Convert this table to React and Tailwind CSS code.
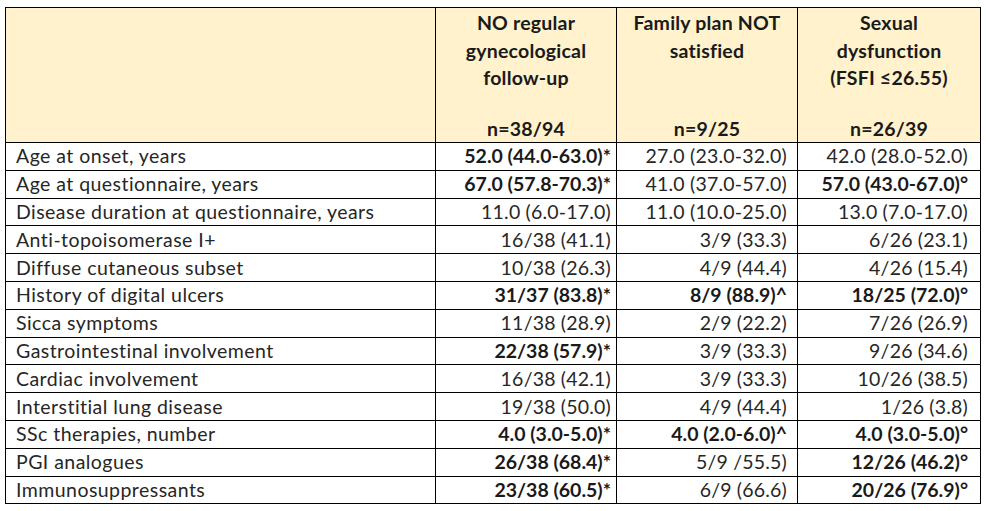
const rows = [
  ['Age at onset, years', ['52.0 (44.0-63.0)*', true], ['27.0 (23.0-32.0)', false], ['42.0 (28.0-52.0)', false]],
  ['Age at questionnaire, years', ['67.0 (57.8-70.3)*', true], ['41.0 (37.0-57.0)', false], ['57.0 (43.0-67.0)°', true]],
  ['Disease duration at questionnaire, years', ['11.0 (6.0-17.0)', false], ['11.0 (10.0-25.0)', false], ['13.0 (7.0-17.0)', false]],
  ['Anti-topoisomerase I+', ['16/38 (41.1)', false], ['3/9 (33.3)', false], ['6/26 (23.1)', false]],
  ['Diffuse cutaneous subset', ['10/38 (26.3)', false], ['4/9 (44.4)', false], ['4/26 (15.4)', false]],
  ['History of digital ulcers', ['31/37 (83.8)*', true], ['8/9 (88.9)^', true], ['18/25 (72.0)°', true]],
  ['Sicca symptoms', ['11/38 (28.9)', false], ['2/9 (22.2)', false], ['7/26 (26.9)', false]],
  ['Gastrointestinal involvement', ['22/38 (57.9)*', true], ['3/9 (33.3)', false], ['9/26 (34.6)', false]],
  ['Cardiac involvement', ['16/38 (42.1)', false], ['3/9 (33.3)', false], ['10/26 (38.5)', false]],
  ['Interstitial lung disease', ['19/38 (50.0)', false], ['4/9 (44.4)', false], ['1/26 (3.8)', false]],
  ['SSc therapies, number', ['4.0 (3.0-5.0)*', true], ['4.0 (2.0-6.0)^', true], ['4.0 (3.0-5.0)°', true]],
  ['PGI analogues', ['26/38 (68.4)*', true], ['5/9 /55.5)', false], ['12/26 (46.2)°', true]],
  ['Immunosuppressants', ['23/38 (60.5)*', true], ['6/9 (66.6)', false], ['20/26 (76.9)°', true]],
];

const pads = ['pr-[5px]', 'pr-[10px]', 'pr-[12px]'];

const HeaderCell = ({ lines, n }) => (
  <th className="border border-black bg-[#fff2cc] p-0 align-top font-bold">
    <div className="flex h-[134px] flex-col justify-between pt-px text-center leading-[27.5px]">
      <div>
        {lines.map((l) => (
          <div key={l}>{l}</div>
        ))}
      </div>
      <div>{n}</div>
    </div>
  </th>
);

export default function App() {
  return (
    <div className="min-h-screen bg-white pl-[5px] pt-[7px] text-[19.5px] tracking-[0.2px] text-[#1a1a1a] [font-family:Lato,'Liberation_Sans',sans-serif]">
      <table className="table-fixed border-collapse">
        <colgroup>
          <col className="w-[430px]" />
          <col className="w-[181px]" />
          <col className="w-[181px]" />
          <col className="w-[183px]" />
        </colgroup>
        <thead>
          <tr>
            <th className="border border-black bg-[#fff2cc] p-0" />
            <HeaderCell lines={['NO regular', 'gynecological', 'follow-up']} n="n=38/94" />
            <HeaderCell lines={['Family plan NOT', 'satisfied']} n="n=9/25" />
            <HeaderCell lines={['Sexual', 'dysfunction', '(FSFI ≤26.55)']} n="n=26/39" />
          </tr>
        </thead>
        <tbody>
          {rows.map(([label, ...vals]) => (
            <tr key={label} className="h-[27.8px]">
              <td className="border border-black p-0 pl-[10px] text-left leading-[24px] font-normal tracking-[0.45px] text-[#262626] whitespace-nowrap">
                {label}
              </td>
              {vals.map(([v, bold], i) => (
                <td
                  key={i}
                  className={`border border-black p-0 text-right leading-[24px] whitespace-nowrap ${pads[i]} ${bold ? 'font-bold tracking-normal' : 'font-normal text-[#262626]'}`}
                >
                  {v}
                </td>
              ))}
            </tr>
          ))}
        </tbody>
      </table>
    </div>
  );
}
